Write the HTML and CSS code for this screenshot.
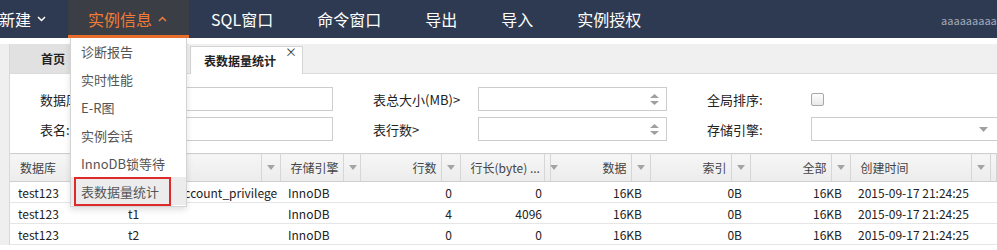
FILE: index.html
```html
<!DOCTYPE html>
<html lang="zh-CN">
<head>
  <meta charset="UTF-8" />
  <title>表数据量统计</title>
  <link rel="stylesheet" href="styles.css">
</head>
<body>
  <header class="topbar">
    <nav class="menu">
      <a class="menu-item">新建 <svg class="caret" width="9" height="6" viewBox="0 0 9 6"><polyline points="1,1 4.5,4.5 8,1" /></svg></a>
      <a class="menu-item active">实例信息 <svg class="caret" width="9" height="6" viewBox="0 0 9 6"><polyline points="1,5 4.5,1.5 8,5" /></svg></a>
      <a class="menu-item">SQL窗口</a>
      <a class="menu-item">命令窗口</a>
      <a class="menu-item">导出</a>
      <a class="menu-item">导入</a>
      <a class="menu-item">实例授权</a>
    </nav>
    <div class="user">aaaaaaaaaa</div>
  </header>

  <ul class="dropdown">
    <li>诊断报告</li>
    <li>实时性能</li>
    <li>E-R图</li>
    <li>实例会话</li>
    <li>InnoDB锁等待</li>
    <li class="current"><span class="mark">表数据量统计</span></li>
  </ul>

  <div class="workspace">
    <aside class="side"></aside>
    <main class="main">
      <div class="tabs">
        <div class="tab home">首页</div>
        <div class="tab active">表数据量统计<span class="close">×</span></div>
      </div>

      <div class="filters">
        <label class="lbl first">数据库:</label>
        <div class="box"></div>
        <label class="lbl">表总大小(MB)&gt;</label>
        <div class="box spin">
          <svg width="9" height="11" viewBox="0 0 9 11"><polygon points="4.5,0 9,4 0,4" /><polygon points="0,7 9,7 4.5,11" /></svg>
        </div>
        <label class="lbl">全局排序:</label>
        <div class="check-cell"><span class="check"></span></div>

        <label class="lbl first">表名:</label>
        <div class="box"></div>
        <label class="lbl">表行数&gt;</label>
        <div class="box spin">
          <svg width="9" height="11" viewBox="0 0 9 11"><polygon points="4.5,0 9,4 0,4" /><polygon points="0,7 9,7 4.5,11" /></svg>
        </div>
        <label class="lbl">存储引擎:</label>
        <div class="box select">
          <svg width="9" height="5" viewBox="0 0 9 5"><polygon points="0,0 9,0 4.5,5" /></svg>
        </div>
      </div>

      <table class="grid">
        <colgroup>
          <col style="width:110px"><col style="width:160px"><col style="width:80px">
          <col style="width:100px"><col style="width:90px"><col style="width:100px">
          <col style="width:100px"><col style="width:100px"><col style="width:140px"><col>
        </colgroup>
        <thead>
          <tr>
            <th><div class="hd"><span class="ht">数据库</span><span class="flt"></span></div></th>
            <th><div class="hd"><span class="ht">表名</span><span class="flt"></span></div></th>
            <th><div class="hd"><span class="ht">存储引擎</span><span class="flt"></span></div></th>
            <th><div class="hd"><span class="ht num">行数</span><span class="flt"></span></div></th>
            <th><div class="hd"><span class="ht">行长(byte) ...</span><span class="flt"></span></div></th>
            <th><div class="hd"><span class="ht num">数据</span><span class="flt"></span></div></th>
            <th><div class="hd"><span class="ht num">索引</span><span class="flt"></span></div></th>
            <th><div class="hd"><span class="ht num">全部</span><span class="flt"></span></div></th>
            <th><div class="hd"><span class="ht">创建时间</span><span class="flt"></span></div></th>
            <th></th>
          </tr>
        </thead>
        <tbody>
          <tr>
            <td>test123</td><td>tb_user_account_privilege</td><td>InnoDB</td>
            <td class="num">0</td><td class="num">0</td><td class="num">16KB</td>
            <td class="num">0B</td><td class="num">16KB</td><td>2015-09-17 21:24:25</td><td></td>
          </tr>
          <tr>
            <td>test123</td><td>t1</td><td>InnoDB</td>
            <td class="num">4</td><td class="num">4096</td><td class="num">16KB</td>
            <td class="num">0B</td><td class="num">16KB</td><td>2015-09-17 21:24:25</td><td></td>
          </tr>
          <tr>
            <td>test123</td><td>t2</td><td>InnoDB</td>
            <td class="num">0</td><td class="num">0</td><td class="num">16KB</td>
            <td class="num">0B</td><td class="num">16KB</td><td>2015-09-17 21:24:25</td><td></td>
          </tr>
        </tbody>
      </table>
    </main>
  </div>

  <script>
    document.querySelectorAll('.flt').forEach(el => {
      el.innerHTML = '<svg width="8" height="5" viewBox="0 0 8 5"><polygon points="0,0 8,0 4,5" /></svg>';
    });
  </script>
</body>
</html>
```

FILE: styles.css
```css
body {
  margin: 0;
  width: 997px;
  height: 250px;
  overflow: hidden;
  position: relative;
  background: #fff;
  color: #333;
  font-family: "Noto Sans CJK SC", "Liberation Sans", sans-serif;
  font-size: 12px;
}
.topbar {
  height: 38px;
  background: #2e3a51;
  display: flex;
  justify-content: space-between;
}
.menu {
  display: flex;
  margin-left: -23px;
}
.menu-item {
  display: flex;
  align-items: center;
  gap: 6px;
  padding: 0 22px;
  color: #fff;
  font-size: 16px;
  text-decoration: none;
  white-space: nowrap;
}
.menu-item .caret {
  fill: none;
  stroke: currentColor;
  stroke-width: 1.5;
}
.menu-item.active {
  background: #3b3e45;
  color: #f27b37;
  padding: 0 22px 0 20px;
  box-shadow: inset 0 -3px #ea6e2c;
}
.user {
  color: #a3abba;
  font-size: 11px;
  padding-top: 12px;
  margin-right: -6px;
  white-space: nowrap;
}

.dropdown {
  position: absolute;
  top: 38px;
  left: 70px;
  width: 117px;
  margin: 0;
  padding: 0 0 1px;
  list-style: none;
  background: #fff;
  border: 1px solid #d4d4d4;
  border-top: none;
  box-sizing: border-box;
  box-shadow: 0 3px 6px rgba(0, 0, 0, 0.12);
  z-index: 5;
}
.dropdown li {
  height: 28px;
  line-height: 28px;
  padding-left: 10px;
  color: #555;
  font-size: 13px;
}
.dropdown li.current {
  background: #ececec;
  padding-left: 0;
}
.dropdown .mark {
  display: block;
  box-sizing: border-box;
  width: 97px;
  height: 29px;
  margin: -1px 0 0 3px;
  padding-left: 5px;
  line-height: 25px;
  border: 2px solid #df2a2c;
}

.workspace {
  display: flex;
  margin-top: 6px;
}
.side {
  width: 9px;
  flex: none;
  background: #efefef;
  border-right: 1px solid #d8d8d8;
}
.main {
  flex: 1;
  overflow: hidden;
}

.tabs {
  display: flex;
  align-items: flex-end;
  height: 29px;
  background: #f0f0f0;
  border-bottom: 1px solid #dcdcdc;
}
.tab {
  font-weight: bold;
  color: #222;
  box-sizing: border-box;
}
.tab.home {
  width: 86px;
  height: 29px;
  line-height: 29px;
  text-align: center;
  background: #e1e1e1;
}
.tab.active {
  position: relative;
  width: 113px;
  height: 28px;
  margin: 0 0 -1px 94px;
  padding-left: 13px;
  line-height: 28px;
  background: #fff;
  border: 1px solid #d4d4d4;
  border-bottom: none;
}
.tab .close {
  position: absolute;
  top: -9px;
  right: 5px;
  font-weight: normal;
  font-size: 12px;
  color: #333;
}

.filters {
  display: grid;
  grid-template-columns: 88px 205px 145px 189px 144px 200px;
  grid-auto-rows: 24px;
  row-gap: 6px;
  padding: 13px 0 12px 30px;
}
.lbl {
  display: flex;
  align-items: center;
  padding-left: 40px;
  font-size: 13px;
  color: #222;
  white-space: nowrap;
}
.lbl.first {
  padding-left: 0;
}
.box {
  box-sizing: border-box;
  border: 1px solid #cccccc;
  background: #fff;
  display: flex;
  align-items: center;
  justify-content: flex-end;
}
.box svg {
  fill: #a0a0a0;
}
.box.spin {
  padding-right: 7px;
}
.box.select {
  justify-content: flex-start;
  padding-left: 167px;
}
.check-cell {
  display: flex;
  align-items: center;
}
.check {
  width: 11px;
  height: 11px;
  border: 1px solid #a8a8a8;
  border-radius: 2px;
  background: linear-gradient(#fdfdfd, #e9e9e9);
}

.grid {
  width: 987px;
  table-layout: fixed;
  border-collapse: collapse;
}
.grid th {
  padding: 0;
  height: 27px;
  font-weight: normal;
  color: #444;
  background: linear-gradient(#f6f6f6, #ececec);
  border-top: 1px solid #cfcfcf;
  border-bottom: 1px solid #cfcfcf;
  border-right: 1px solid #d6d6d6;
}
.hd {
  display: flex;
  height: 27px;
}
.ht {
  flex: 1;
  padding: 0 4px 0 10px;
  line-height: 27px;
  text-align: left;
  white-space: nowrap;
}
.ht.num {
  text-align: right;
}
.flt {
  width: 18px;
  flex: none;
  display: flex;
  align-items: center;
  justify-content: center;
  border-left: 1px solid #d6d6d6;
}
.flt svg {
  fill: #a4a4a4;
}
.grid td {
  height: 20px;
  padding: 0 8px;
  color: #222;
  white-space: nowrap;
  overflow: hidden;
  border-bottom: 1px solid #e6e6e6;
}
.grid td.num {
  text-align: right;
}
```
